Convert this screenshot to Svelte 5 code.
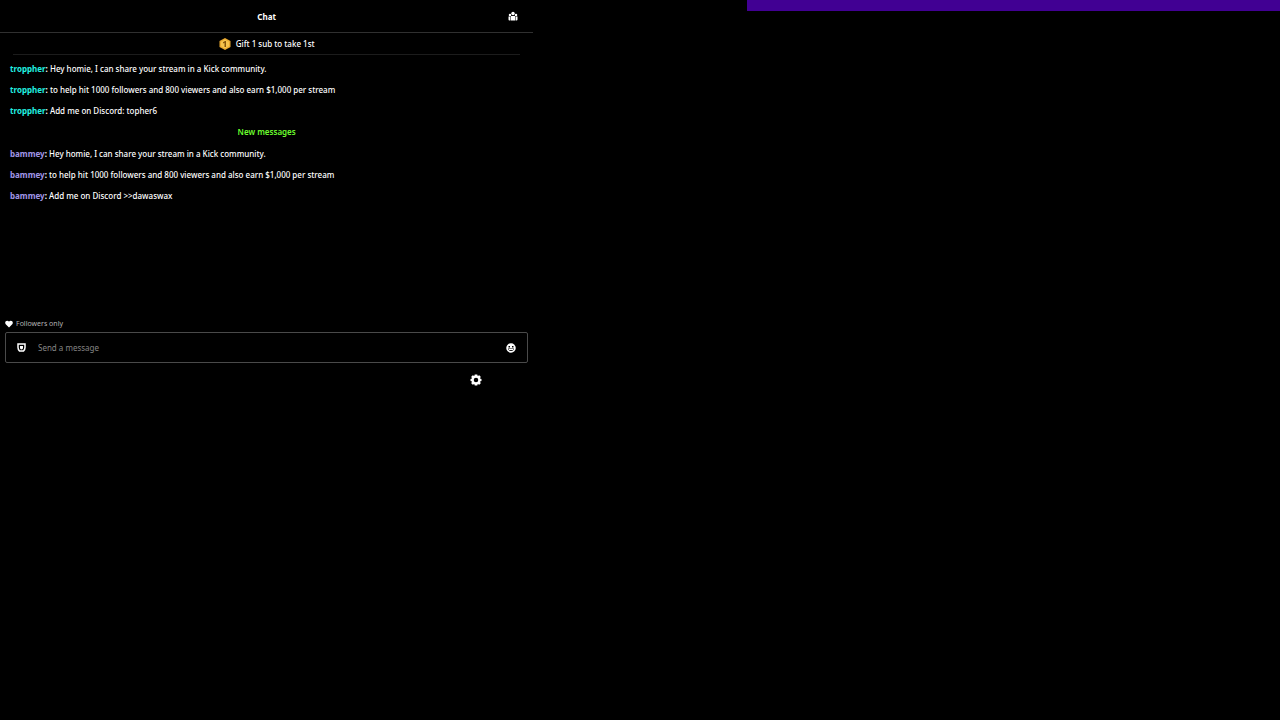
<script>
    let draft = $state("");

    const before = [
        { user: "troppher", color: "cyan", text: "Hey homie, I can share your stream in a Kick community." },
        { user: "troppher", color: "cyan", text: "to help hit 1000 followers and 800 viewers and also earn $1,000 per stream" },
        { user: "troppher", color: "cyan", text: "Add me on Discord: topher6" }
    ];

    const after = [
        { user: "bammey", color: "violet", text: "Hey homie, I can share your stream in a Kick community." },
        { user: "bammey", color: "violet", text: "to help hit 1000 followers and 800 viewers and also earn $1,000 per stream" },
        { user: "bammey", color: "violet", text: "Add me on Discord >>dawaswax" }
    ];
</script>

{#snippet messages(list)}
    <ul class="messages">
        {#each list as message}
            <li><b class={message.color}>{message.user}</b><b>:</b> {message.text}</li>
        {/each}
    </ul>
{/snippet}

<div class="page">
    <section class="chat">
        <header>
            <h1>Chat</h1>
            <button class="community" aria-label="Community">
                <svg width="10" height="10" viewBox="0 0 20 20" fill="currentColor">
                    <circle cx="10" cy="5" r="3.500" />
                    <circle cx="4" cy="8" r="2.500" />
                    <circle cx="16" cy="8" r="2.500" />
                    <path d="M6 10h8v9H6zM1 11h4v8H3q-2 0-2-2zM15 11h4v6q0 2-2 2h-2z" />
                </svg>
            </button>
        </header>

        <div class="gift">
            <svg width="12" height="12" viewBox="0 0 24 24">
                <path d="M12 0 23 6v12L12 24 1 18V6z" fill="#e9a82f" />
                <path d="M12 3 20 7.500v9L12 21l-8-4.500v-9z" fill="#f6c34d" />
                <path d="M8 8.500 12 6h2v12h-3V9.500L8 11z" fill="#85550c" />
            </svg>
            <span>Gift 1 sub to take 1st</span>
        </div>

        <div class="log">
            {@render messages(before)}
            <p class="new">New messages</p>
            {@render messages(after)}
        </div>

        <div class="mode">
            <svg width="8" height="8" viewBox="0 0 16 16" fill="currentColor">
                <path d="M8 15 1.500 8.500C-2 4 3.500-1.500 8 3c4.500-4.500 10 1 6.500 5.500z" />
            </svg>
            <span>Followers only</span>
        </div>

        <form class="composer" onsubmit={(e) => e.preventDefault()}>
            <button type="button" aria-label="Chat identity">
                <svg width="9" height="9" viewBox="0 0 18 18" fill="none" stroke="currentColor">
                    <path d="M2 2h14v7q0 4-3 7H5q-3-3-3-7z" stroke-width="3" />
                    <path d="M6 6h6v4q0 2-3 3-3-1-3-3z" fill="currentColor" stroke="none" />
                </svg>
            </button>
            <input type="text" placeholder="Send a message" aria-label="Send a message" bind:value={draft}>
            <button type="button" aria-label="Emotes">
                <svg width="10" height="10" viewBox="0 0 20 20">
                    <circle cx="10" cy="10" r="9.500" fill="currentColor" />
                    <path d="M5 6h3v3H5zM12 6h3v3h-3zM4 11h12q-1 5-6 5t-6-5z" fill="#000" />
                    <path d="M6 13h8" stroke="currentColor" stroke-width="2" />
                </svg>
            </button>
        </form>

        <footer>
            <button aria-label="Chat settings">
                <svg width="12" height="12" viewBox="0 0 24 24" fill="currentColor">
                    <path fill-rule="evenodd" d="M9.500 1h5l1 3 3-1.500 3 3L20 9l3 1v4l-3 1 1.500 3.500-3 3-3-1.500-1 3h-5l-1-3-3 1.500-3-3L4 15l-3-1v-4l3-1-1.500-3.500 3-3 3 1.500zM12 7.500a4.500 4.500 0 1 0 0 9 4.500 4.500 0 0 0 0-9z" />
                </svg>
            </button>
        </footer>
    </section>

    <div class="banner"></div>
</div>

<style>
    :global(body) {
        background: #000;
    }

    .page {
        display: grid;
        grid-template-columns: 5fr 2fr 5fr;
        align-items: start;
        min-height: 100vh;
        background: #000;
        color: #fff;
        font: 8px/21px "Noto Sans", "Open Sans", sans-serif;
    }

    .banner {
        grid-column: 3;
        height: 11px;
        background: #410093;
    }

    h1, p, ul {
        margin: 0;
        padding: 0;
        font-size: inherit;
    }

    button {
        display: flex;
        padding: 0;
        border: 0;
        background: none;
        color: inherit;
        cursor: pointer;
    }

    header {
        display: grid;
        grid-template-columns: 1fr auto 1fr;
        align-items: center;
        height: 32px;
        padding: 0 15px;
        border-bottom: 1px solid #303030;
    }

    h1 {
        grid-column: 2;
    }

    .community {
        justify-self: end;
    }

    .gift {
        display: flex;
        align-items: center;
        justify-content: center;
        gap: 5px;
        margin: 0 13px;
        border-bottom: 1px solid #1c1c1c;
        font-weight: 500;
    }

    .log {
        min-height: 261px;
        padding: 3px 10px 0;
        box-sizing: border-box;
    }

    .messages {
        list-style: none;
        font-weight: 500;
    }

    .cyan {
        color: #22f0e0;
    }

    .violet {
        color: #a196e8;
    }

    .new {
        color: #6cff2e;
        font-weight: 600;
        line-height: 22px;
        text-align: center;
    }

    .mode {
        display: flex;
        align-items: center;
        gap: 3px;
        padding: 0 5px;
        font-size: 7px;
        line-height: 16px;
    }

    .mode span {
        color: #b4b4b4;
    }

    .composer {
        display: flex;
        align-items: center;
        gap: 12px;
        height: 29px;
        margin: 0 5px;
        padding: 0 11px;
        border: 1px solid #4a4a4a;
        border-radius: 2px;
    }

    input {
        flex: 1;
        min-width: 0;
        padding: 0;
        border: 0;
        outline: 0;
        background: none;
        color: inherit;
        font: inherit;
    }

    input::placeholder {
        color: #858585;
        opacity: 1;
    }

    footer {
        display: flex;
        justify-content: flex-end;
        padding: 11px 51px;
    }
</style>
